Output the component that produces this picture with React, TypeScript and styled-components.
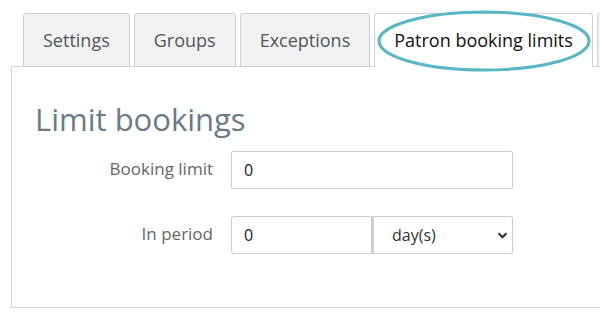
import styled, { createGlobalStyle } from "styled-components";

const tabs = ["Settings", "Groups", "Exceptions", "Patron booking limits", ""];
const activeTab = 3;

const GlobalStyle = createGlobalStyle`
  html, body {
    margin: 0;
    padding: 0;
    background: #fff;
    overflow: hidden;
  }
  body {
    font-family: "Open Sans", "Liberation Sans", sans-serif;
  }
`;

export default function App() {
  return (
    <>
      <GlobalStyle />
      <Page>
        <TabList>
          {tabs.map((text, i) => (
            <Tab key={i} $active={i === activeTab}>
              {text}
              {i === activeTab && (
                <Highlight viewBox="0 0 214 62" width="214" height="62">
                  <ellipse cx="107" cy="31" rx="105" ry="29" fill="none" stroke="#58b6c6" strokeWidth="3" />
                </Highlight>
              )}
            </Tab>
          ))}
        </TabList>
        <Panel>
          <Heading>Limit bookings</Heading>
          <Form>
            <Label htmlFor="limit">Booking limit</Label>
            <Input id="limit" defaultValue="0" />
            <Label htmlFor="period">In period</Label>
            <InputGroup>
              <Input id="period" defaultValue="0" $joined />
              <SelectWrap>
                <Select defaultValue="days">
                  <option value="days">day(s)</option>
                  <option value="weeks">week(s)</option>
                </Select>
                <Chevron viewBox="0 0 12 8" width="11" height="7">
                  <polyline points="1.5,1.5 6,6 10.5,1.5" fill="none" stroke="#333" strokeWidth="2.6" />
                </Chevron>
              </SelectWrap>
            </InputGroup>
          </Form>
        </Panel>
      </Page>
    </>
  );
}

const Page = styled.div`
  width: 720px;
  padding: 13px 0 0 11px;
`;

const TabList = styled.div`
  display: flex;
  gap: 4px;
  padding-left: 12px;
  margin-bottom: -1px;
  position: relative;
  z-index: 1;
`;

const Tab = styled.div<{ $active?: boolean }>`
  position: relative;
  box-sizing: border-box;
  height: 54px;
  min-width: 80px;
  padding: 0 19px;
  display: flex;
  align-items: center;
  white-space: nowrap;
  font-size: 18px;
  border: 1px solid #cfcfcf;
  border-bottom-color: ${(p) => (p.$active ? "#fff" : "#cfcfcf")};
  border-radius: 3px 3px 0 0;
  background: ${(p) => (p.$active ? "#fff" : "#f1f2f4")};
  color: ${(p) => (p.$active ? "#111" : "#555")};
`;

const Highlight = styled.svg`
  position: absolute;
  left: 2px;
  top: -4px;
  pointer-events: none;
`;

const Panel = styled.div`
  border: 1px solid #d6d6d6;
  padding: 35px 0 53px 23px;
`;

const Heading = styled.h2`
  margin: 0 0 15px;
  font-size: 31px;
  line-height: 34px;
  font-weight: 400;
  color: #6a7a87;
`;

const Form = styled.div`
  display: grid;
  grid-template-columns: 178px 282px;
  column-gap: 18px;
  row-gap: 27px;
  align-items: center;
`;

const Label = styled.label`
  text-align: right;
  font-size: 17px;
  line-height: 22px;
  padding-bottom: 2px;
  color: #666;
`;

const Input = styled.input<{ $joined?: boolean }>`
  box-sizing: border-box;
  width: 100%;
  height: 38px;
  padding: 0 12px;
  font-family: inherit;
  font-size: 16px;
  color: #222;
  border: 1px solid #cccccc;
  border-radius: ${(p) => (p.$joined ? "3px 0 0 3px" : "2px")};
  outline: none;
`;

const InputGroup = styled.div`
  display: flex;
  height: 38px;
`;

const SelectWrap = styled.div`
  position: relative;
  flex: 0 0 141px;
`;

const Select = styled.select`
  appearance: none;
  box-sizing: border-box;
  width: 100%;
  height: 38px;
  padding: 0 0 0 18px;
  font-family: inherit;
  font-size: 16px;
  color: #333;
  background: #fff;
  border: 1px solid #cccccc;
  border-left: 2px solid #d0d0d0;
  border-radius: 0 3px 3px 0;
  outline: none;
`;

const Chevron = styled.svg`
  position: absolute;
  right: 5px;
  top: 16px;
  pointer-events: none;
`;
